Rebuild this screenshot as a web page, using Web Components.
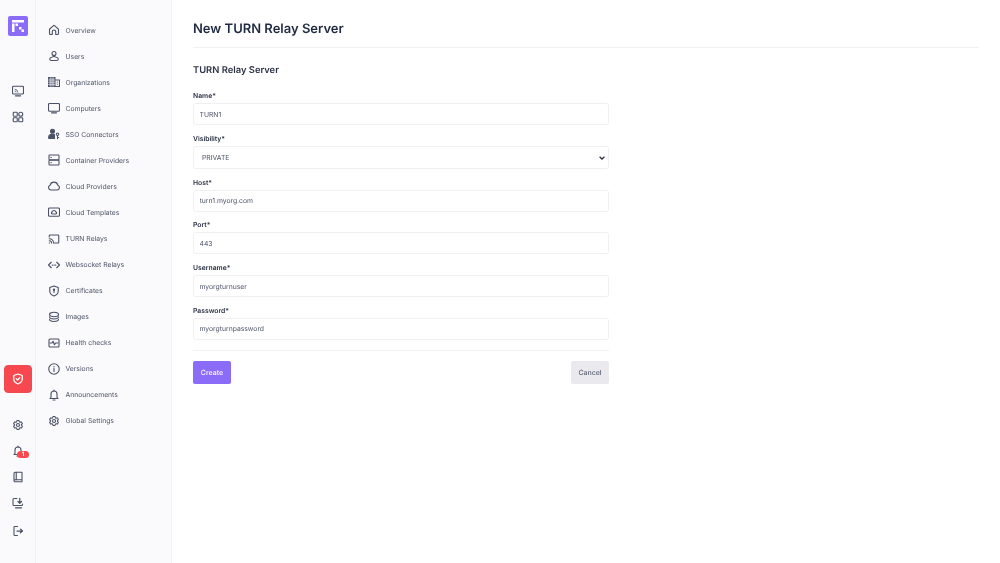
<!DOCTYPE html>
<html>
<head>
<meta charset="utf-8">
<title>New TURN Relay Server</title>
<style>
  html, body { margin: 0; height: 100%; background: #fff; }
  body { font-family: Inter, "Liberation Sans", sans-serif; color: #1f2937; overflow: hidden; text-rendering: geometricPrecision; }
</style>
</head>
<body>
<app-shell>
  <app-rail slot="rail"></app-rail>
  <app-nav slot="nav">
    <nav-item icon="home">Overview</nav-item>
    <nav-item icon="user">Users</nav-item>
    <nav-item icon="org">Organizations</nav-item>
    <nav-item icon="monitor">Computers</nav-item>
    <nav-item icon="sso">SSO Connectors</nav-item>
    <nav-item icon="server">Container Providers</nav-item>
    <nav-item icon="cloud">Cloud Providers</nav-item>
    <nav-item icon="template">Cloud Templates</nav-item>
    <nav-item icon="cast">TURN Relays</nav-item>
    <nav-item icon="code">Websocket Relays</nav-item>
    <nav-item icon="shield">Certificates</nav-item>
    <nav-item icon="layers">Images</nav-item>
    <nav-item icon="health">Health checks</nav-item>
    <nav-item icon="info">Versions</nav-item>
    <nav-item icon="bell">Announcements</nav-item>
    <nav-item icon="gear">Global Settings</nav-item>
  </app-nav>
  <relay-form></relay-form>
</app-shell>

<script>
const ICONS = {
  home: '<path d="M3 10.500 10.500 3.600a2.200 2.200 0 0 1 3 0L21 10.500V19a2 2 0 0 1-2 2h-3.500v-5.500a3.500 3.500 0 0 0-7 0V21H5a2 2 0 0 1-2-2z"/>',
  user: '<circle cx="12" cy="7" r="4"/><path d="M12 11c0 1.500-1 2.500-3 3-3 .6-5.500 1.500-5.500 4 0 1.800 1 3 3 3h11c2 0 3-1.200 3-3 0-2.500-2.500-3.400-5.500-4-2-.5-3-1.500-3-3z"/>',
  org: '<path d="M1 3h13v18H1z" fill="currentColor" fill-opacity=".7"/><path d="M14 8h9v13h-9"/><path d="M1 8h13M1 12.500h13M1 17h13M5.500 3v18M10 3v18" stroke="#fafafc" stroke-width="1"/><path d="M18.500 12v.5M18.500 16v.5"/>',
  monitor: '<rect x="1" y="3" width="22" height="15.500" rx="2"/><path d="M7 21.500h10" stroke-width="2.500"/>',
  sso: '<circle cx="9" cy="6.500" r="4" fill="currentColor"/><path d="M1.500 21v-3c0-3 3-5.500 7.500-5.500 1.500 0 3 .3 4 .8V21z" fill="currentColor"/><circle cx="19" cy="12.500" r="2.500"/><path d="M19 15v6.500M19 19h2.500"/>',
  server: '<rect x="2" y="2" width="20" height="9.500" rx="1.500"/><rect x="2" y="12.500" width="20" height="9.500" rx="1.500"/><path d="M6 6.800h.5M6 17.200h.5"/>',
  cloud: '<path d="M6 20a5 5 0 0 1-1.600-9.700 7.800 7.800 0 0 1 15.200 0A5 5 0 0 1 18 20z"/>',
  template: '<rect x="1" y="4" width="22" height="16.500" rx="2"/><path d="M8.500 16a2.200 2.200 0 0 1 0-4.300 3.600 3.600 0 0 1 7 0 2.200 2.200 0 0 1 0 4.300z"/>',
  cast: '<path d="M2.500 8V5.500A1.500 1.500 0 0 1 4 4h16a1.500 1.500 0 0 1 1.500 1.500v13A1.500 1.500 0 0 1 20 20h-7"/><path d="M2.500 11.500a8.500 8.500 0 0 1 8.500 8.500M2.500 15.500A4.500 4.500 0 0 1 7 20"/><path d="M2.500 20h.5"/>',
  code: '<path d="M6.500 6.500 1 12l5.500 5.500M17.500 6.500 23 12l-5.500 5.500"/><path d="M8.500 12h.5M12 12h.5M15 12h.5" stroke-width="2.500"/>',
  shield: '<path d="M12 2 20.500 5v7c0 4.800-3.700 8.200-8.500 10-4.800-1.800-8.500-5.200-8.500-10V5z"/><circle cx="12" cy="9.500" r="1.200" fill="currentColor"/><path d="M12 10v5"/>',
  layers: '<path d="M12 2.500c5 0 9 2 9 4.500s-4 4.500-9 4.500S3 9.500 3 7s4-4.500 9-4.500z"/><path d="M3 11.500c0 2.500 4 4.500 9 4.500s9-2 9-4.500M3 16.500c0 2.500 4 4.500 9 4.500s9-2 9-4.500"/>',
  health: '<path d="M2 10V6a2 2 0 0 1 2-2h16a2 2 0 0 1 2 2v4M2 14v4a2 2 0 0 0 2 2h16a2 2 0 0 0 2-2v-4"/><path d="M1 12h7l2-3.500 3 7 2.500-3.500H23"/>',
  info: '<circle cx="12" cy="12" r="10.500"/><path d="M12 11v6"/><path d="M12 7.200v.5" stroke-width="2.600"/>',
  bell: '<path d="M6 16.500V10a6 6 0 0 1 12 0v6.500l2 2.500H4z"/><path d="M10 22h4M12 2v2"/>',
  gear: '<path d="M9.594 3.940c.09-.542.56-.94 1.110-.94h2.593c.55 0 1.020.398 1.110.94l.213 1.281c.063.374.313.686.645.87.074.04.147.083.22.127.325.196.72.257 1.075.124l1.217-.456a1.125 1.125 0 0 1 1.370.49l1.296 2.247a1.125 1.125 0 0 1-.26 1.431l-1.003.827c-.293.241-.438.613-.43.992a7.723 7.723 0 0 1 0 .255c-.008.378.137.75.43.991l1.004.827c.424.35.534.955.26 1.430l-1.298 2.247a1.125 1.125 0 0 1-1.369.491l-1.217-.456c-.355-.133-.75-.072-1.076.124a6.470 6.470 0 0 1-.22.128c-.331.183-.581.495-.644.869l-.213 1.281c-.09.543-.56.94-1.110.94h-2.594c-.55 0-1.019-.398-1.110-.94l-.213-1.281c-.062-.374-.312-.686-.644-.87a6.520 6.520 0 0 1-.22-.127c-.325-.196-.72-.257-1.076-.124l-1.217.456a1.125 1.125 0 0 1-1.369-.49l-1.297-2.247a1.125 1.125 0 0 1 .26-1.431l1.004-.827c.292-.24.437-.613.43-.991a6.932 6.932 0 0 1 0-.255c.007-.38-.138-.751-.43-.992l-1.004-.827a1.125 1.125 0 0 1-.26-1.430l1.297-2.247a1.125 1.125 0 0 1 1.370-.491l1.216.456c.356.133.751.072 1.076-.124.072-.044.146-.086.22-.128.332-.183.582-.495.644-.869z"/><circle cx="12" cy="12" r="3"/>',
  apps: '<rect x="2.500" y="2.500" width="8" height="8" rx="1.500"/><circle cx="17.500" cy="6.500" r="4"/><rect x="2.500" y="13.500" width="8" height="8" rx="1.500"/><rect x="13.500" y="13.500" width="8" height="8" rx="1.500"/>',
  screen: '<rect x="1" y="2.500" width="22" height="15.500" rx="2"/><path d="M7 21.500h10" stroke-width="2.500"/><path d="M6 8.500a5.500 5.500 0 0 1 5.500 5.500M6 12a2 2 0 0 1 2 2" stroke-width="1.600"/>',
  check: '<path d="M12 2 20.500 5v7c0 4.800-3.700 8.200-8.500 10-4.800-1.800-8.500-5.200-8.500-10V5z" stroke-width="2.600"/><path d="M8.500 11.500l2.500 2.500 4.500-4.500" stroke-width="2.600"/>',
  book: '<path d="M4 19V4.500A2 2 0 0 1 6 2.500h14v15H6.500A2.500 2.500 0 0 0 4 19.500a2.200 2.200 0 0 0 2.500 2H20V17"/><path d="M8.500 2.500v15"/>',
  download: '<path d="M10 3H4a2 2 0 0 0-2 2v10a2 2 0 0 0 2 2h15a2 2 0 0 0 2-2v-1"/><path d="M7 21.500h12" stroke-width="2.500"/><path d="M15.500 2.500v9.500M12 9l3.500 3.500L19 9" stroke-width="2.500"/>',
  logout: '<path d="M11 3H5.500a1.500 1.500 0 0 0-1.500 1.500v15A1.500 1.500 0 0 0 5.500 21H11"/><path d="M10 12h11M17 8.500l4 3.500-4 3.500" stroke-width="2.500"/>'
};

function iconSvg(name, size) {
  return `<svg width="${size}" height="${size}" viewBox="0 0 24 24" fill="none" stroke="currentColor" stroke-width="2.200" stroke-linecap="round" stroke-linejoin="round">${ICONS[name]}</svg>`;
}

class AppShell extends HTMLElement {
  connectedCallback() {
    this.attachShadow({ mode: 'open' });
    this.shadowRoot.innerHTML = `
      <style>
        :host { display: flex; height: 563px; width: 1000px; will-change: transform; }
        ::slotted([slot="rail"]) { flex: 0 0 36px; }
        ::slotted([slot="nav"]) { flex: 0 0 136px; }
      </style>
      <slot name="rail"></slot>
      <slot name="nav"></slot>
      <slot></slot>
    `;
  }
}

class AppRail extends HTMLElement {
  connectedCallback() {
    this.attachShadow({ mode: 'open' });
    this.shadowRoot.innerHTML = `
      <style>
        :host {
          display: flex;
          flex-direction: column;
          align-items: center;
          box-sizing: border-box;
          height: 100%;
          padding-top: 16px;
          background: #fafafc;
          border-right: 1px solid #f1f1f5;
          color: #4b5166;
        }
        .logo {
          width: 20px;
          height: 20px;
          background: #8b6cf8;
          border-radius: 2px;
          display: flex;
          align-items: center;
          justify-content: center;
          margin-bottom: 42px;
          flex: none;
        }
        .ico {
          width: 26px;
          height: 26px;
          display: flex;
          align-items: center;
          justify-content: center;
          position: relative;
          flex: none;
        }
        .alert {
          width: 28px;
          height: 28px;
          background: #f6484e;
          border: 1px solid #ef4a50;
          box-sizing: border-box;
          border-radius: 4px;
          color: #fff;
          display: flex;
          align-items: center;
          justify-content: center;
          margin: 235px 0 19px;
          flex: none;
        }
        .badge {
          position: absolute;
          left: 12.500px;
          top: 13px;
          width: 12px;
          height: 7px;
          border-radius: 4px;
          background: #f6484e;
          color: #fff;
          font-size: 6px;
          font-weight: 700;
          line-height: 7px;
          text-align: center;
        }
        .last { margin-top: 2px; }
      </style>
      <div class="logo">
        <svg width="14" height="14" viewBox="0 0 14 14" fill="#fff">
          <path d="M1 1h12v2.500H1zM1 4.500h2.500V13H1zM4.500 4.500H7V7H4.500zM8 8h2.500v2.500H8zM10.500 10.500H13V13h-2.500z"/>
        </svg>
      </div>
      <div class="ico">${iconSvg('screen', 12)}</div>
      <div class="ico">${iconSvg('apps', 12)}</div>
      <div class="alert">${iconSvg('check', 12)}</div>
      <div class="ico">${iconSvg('gear', 12)}</div>
      <div class="ico">${iconSvg('bell', 12)}<span class="badge">1</span></div>
      <div class="ico">${iconSvg('book', 12)}</div>
      <div class="ico">${iconSvg('download', 12)}</div>
      <div class="ico last">${iconSvg('logout', 12)}</div>
    `;
  }
}

class AppNav extends HTMLElement {
  connectedCallback() {
    this.attachShadow({ mode: 'open' });
    this.shadowRoot.innerHTML = `
      <style>
        :host {
          display: flex;
          flex-direction: column;
          box-sizing: border-box;
          height: 100%;
          padding: 17px 0 0 12px;
          background: #fafafc;
          border-right: 1px solid #f4f4f7;
        }
      </style>
      <slot></slot>
    `;
  }
}

class NavItem extends HTMLElement {
  connectedCallback() {
    this.attachShadow({ mode: 'open' });
    this.shadowRoot.innerHTML = `
      <style>
        :host {
          display: flex;
          align-items: center;
          gap: 5.500px;
          height: 26.070px;
          font-size: 6.800px;
          color: #4f5568;
        }
        svg { color: #4b5166; flex: none; }
      </style>
      ${iconSvg(this.getAttribute('icon'), 12)}
      <slot></slot>
    `;
  }
}

class FormField extends HTMLElement {
  connectedCallback() {
    const label = this.getAttribute('label');
    const value = this.getAttribute('value');
    const isSelect = this.hasAttribute('select');
    this.attachShadow({ mode: 'open' });
    this.shadowRoot.innerHTML = `
      <style>
        :host { display: block; margin-bottom: 6.800px; position: relative; }
        label {
          display: block;
          height: 14px;
          line-height: 13.500px;
          font-size: 6.800px;
          font-weight: 600;
          color: #2b3245;
        }
        input, select {
          display: block;
          box-sizing: border-box;
          width: 100%;
          height: 22px;
          border: 1px solid #f0f0f3;
          border-radius: 2.500px;
          background: #fff;
          font-family: inherit;
          font-size: 6.800px;
          color: #4f5568;
          padding: 0 5.500px;
          margin: 0;
          outline: none;
          text-rendering: geometricPrecision;
        }
        select { height: 23px; padding: 0 8px; appearance: none; -webkit-appearance: none; }
        svg { position: absolute; right: 4px; bottom: 9px; }
      </style>
      <label>${label}</label>
      ${isSelect
        ? `<select><option>${value}</option></select>
           <svg width="6" height="4" viewBox="0 0 6 4" fill="none" stroke="#2b3245" stroke-width="1.300"><path d="M.6.7 3 3l2.400-2.300"/></svg>`
        : `<input type="text" value="${value}">`}
    `;
  }
}

class RelayForm extends HTMLElement {
  connectedCallback() {
    this.attachShadow({ mode: 'open' });
    this.shadowRoot.innerHTML = `
      <style>
        :host {
          display: block;
          flex: 1;
          box-sizing: border-box;
          padding: 0 21px 0 21px;
          min-width: 0;
        }
        h1 {
          margin: 0;
          height: 48px;
          box-sizing: border-box;
          border-bottom: 1px solid #f1f1f4;
          font-size: 13px;
          font-weight: 600;
          line-height: 59px;
          color: #1f2a40;
        }
        h2 {
          margin: 16px 0 11px;
          font-size: 9.400px;
          font-weight: 600;
          line-height: 14px;
          color: #2b3245;
        }
        .form { width: 416px; }
        .actions {
          display: flex;
          justify-content: space-between;
          border-top: 1px solid #f3f3f6;
          margin-top: 10px;
          padding-top: 10px;
        }
        button {
          height: 23px;
          width: 38px;
          border-radius: 2px;
          font-family: inherit;
          font-size: 7px;
          font-weight: 500;
          padding: 0;
          border: 0;
          text-rendering: geometricPrecision;
        }
        .primary { background: #8b6cf8; color: #fff; }
        .secondary { background: #e9e9ee; color: #5b6173; }
      </style>
      <h1>New TURN Relay Server</h1>
      <h2>TURN Relay Server</h2>
      <div class="form">
        <form-field label="Name*" value="TURN1"></form-field>
        <form-field label="Visibility*" value="PRIVATE" select></form-field>
        <form-field label="Host*" value="turn1.myorg.com"></form-field>
        <form-field label="Port*" value="443"></form-field>
        <form-field label="Username*" value="myorgturnuser"></form-field>
        <form-field label="Password*" value="myorgturnpassword"></form-field>
        <div class="actions">
          <button class="primary">Create</button>
          <button class="secondary">Cancel</button>
        </div>
      </div>
    `;
  }
}

customElements.define('app-shell', AppShell);
customElements.define('app-rail', AppRail);
customElements.define('app-nav', AppNav);
customElements.define('nav-item', NavItem);
customElements.define('form-field', FormField);
customElements.define('relay-form', RelayForm);
</script>
</body>
</html>
